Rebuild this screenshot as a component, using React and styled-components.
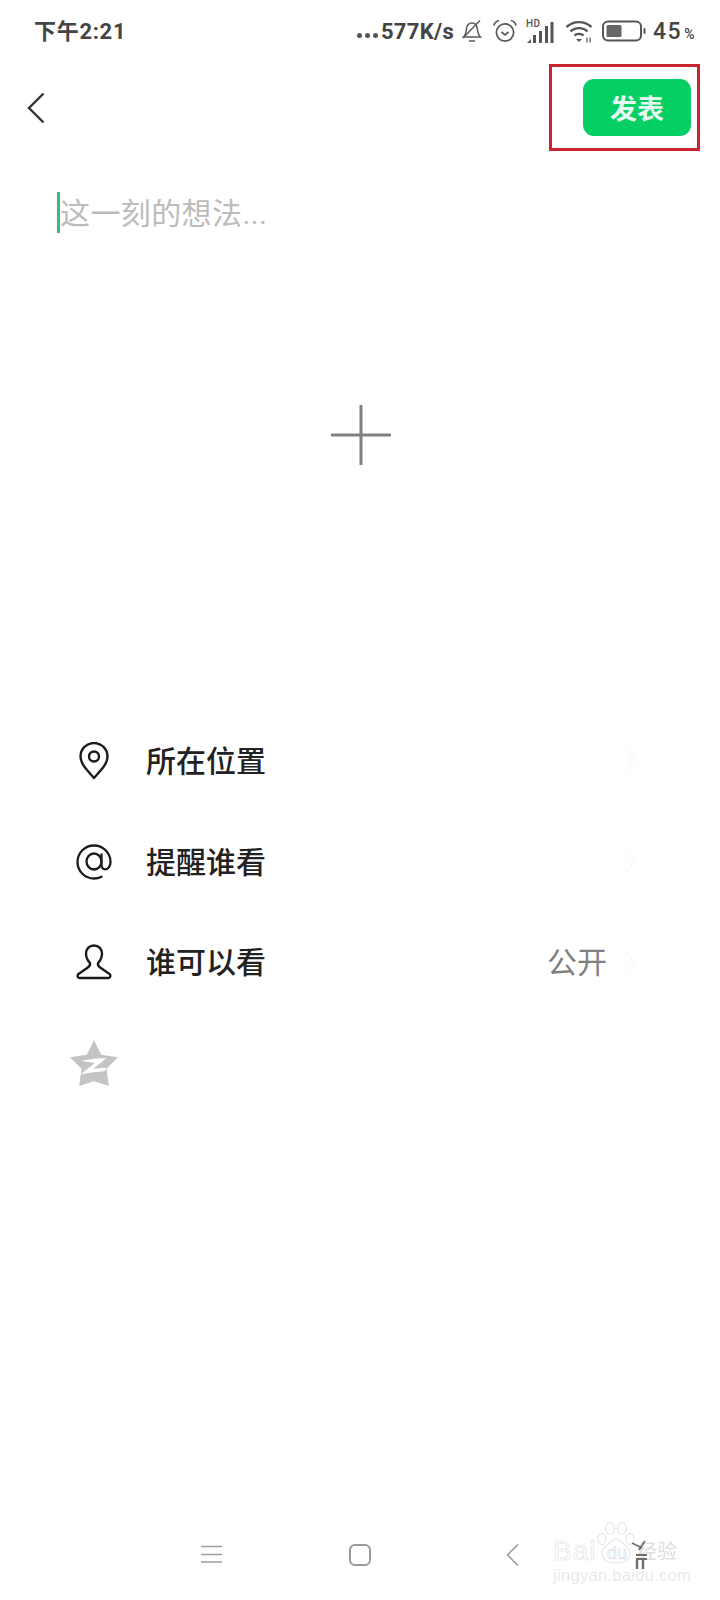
import styled, { createGlobalStyle } from "styled-components";

const GlobalStyle = createGlobalStyle`
  html, body {
    margin: 0;
    padding: 0;
    background: #fff;
  }
  * {
    box-sizing: border-box;
  }
`;

const CJK = `Roboto, "Noto Sans CJK SC", sans-serif`;

const Page = styled.main`
  position: relative;
  width: 720px;
  height: 1600px;
  display: flex;
  flex-direction: column;
  overflow: hidden;
  background: #fff;
  font-family: ${CJK};
`;

const StatusBar = styled.div`
  height: 62px;
  padding: 0 24px 0 34px;
  display: flex;
  align-items: center;
  justify-content: space-between;
  color: #444;
  font-weight: 700;
`;

const Time = styled.span`
  font-size: 22px;
  letter-spacing: 0.7px;
  margin-bottom: 4px;
`;

const StatusRight = styled.div`
  display: flex;
  align-items: center;
`;

const Speed = styled.span`
  font-size: 22px;
  letter-spacing: 0.3px;
  margin-right: 8px;
`;

const Dots = styled.span`
  display: inline-flex;
  gap: 3px;
  margin-right: 3px;
  vertical-align: 1px;

  i {
    width: 5px;
    height: 5px;
    border-radius: 50%;
    background: #555;
  }
`;

const StatusIcon = styled.svg`
  display: block;
  flex: none;
  margin-right: ${(p) => p.$gap || 0}px;
`;

const BatteryText = styled.span`
  font-size: 23px;
  font-weight: 500;
  letter-spacing: 1.5px;
  margin-left: 7px;
`;

const Percent = styled.span`
  font-size: 14px;
  margin-left: 2px;
`;

const Header = styled.header`
  height: 88px;
  padding: 2px 20px 0 27px;
  display: flex;
  justify-content: space-between;
`;

const BackButton = styled.button`
  border: 0;
  padding: 0;
  margin: 28px 0 0;
  height: 32px;
  background: none;
`;

const Highlight = styled.div`
  width: 151px;
  height: 87px;
  border: 3px solid #c9242f;
  padding: 12px 6px 0 0;
  display: flex;
  justify-content: flex-end;
  align-items: flex-start;
`;

const PublishButton = styled.button`
  width: 108px;
  height: 57px;
  border: 0;
  border-radius: 11px;
  background: #06cf63;
  color: #e6fbef;
  font: 700 27px ${CJK};
`;

const Composer = styled.div`
  margin: 42px 0 0 57px;
  height: 41px;
  display: flex;
  align-items: center;
`;

const Caret = styled.span`
  width: 3px;
  height: 41px;
  background: #3abb7c;
`;

const Placeholder = styled.span`
  color: #bcbcbc;
  font-size: 30px;
  line-height: 41px;
  margin-top: 2px;
  letter-spacing: 0.4px;
`;

const AddPhoto = styled.button`
  align-self: flex-start;
  width: 60px;
  height: 60px;
  margin: 172px 0 0 331px;
  padding: 0;
  border: 0;
  background: none;
`;

const Options = styled.ul`
  list-style: none;
  margin: 244px 0 0;
  padding: 0 113px 0 70px;
`;

const Option = styled.li`
  height: 100.5px;
  display: flex;
  align-items: center;
`;

const IconSlot = styled.span`
  width: 48px;
  margin-right: 28px;
  padding-top: 4px;
  display: flex;
  justify-content: center;
`;

const OptionLabel = styled.span`
  flex: 1;
  color: #222;
  font-size: 30px;
  font-weight: 500;
`;

const OptionValue = styled.span`
  color: #808080;
  font-size: 30px;
`;

const FaintChevron = styled.svg`
  position: absolute;
  left: 624px;
  top: ${(p) => p.$top}px;
`;

const NavBar = styled.nav`
  margin-top: auto;
  height: 100px;
  padding: 44px 0 0 201px;
  display: grid;
  grid-template-columns: 148px 157px auto;
  align-items: start;
`;

const Watermark = styled.div`
  position: absolute;
  left: 553px;
  top: 1522px;
  width: 130px;
  height: 62px;
  color: #eaeaea;
`;

const WatermarkBrand = styled.span`
  position: absolute;
  left: 0;
  top: 13px;
  font: 400 28px/32px "Liberation Sans", sans-serif;
  letter-spacing: 1px;
  color: #fff;
  -webkit-text-stroke: 0.7px #e2e2e2;
`;

const WatermarkDu = styled.span`
  position: absolute;
  left: 54px;
  top: 20px;
  font: 400 18px/22px "Liberation Sans", sans-serif;
  color: #fff;
  -webkit-text-stroke: 0.6px #dadada;
`;

const WatermarkName = styled.span`
  position: absolute;
  left: 84px;
  top: 17px;
  font-size: 20px;
  line-height: 26px;
  color: #dedede;
  white-space: nowrap;
`;

const WatermarkUrl = styled.span`
  position: absolute;
  left: 0;
  bottom: 0;
  font: 400 16.5px/18px "Liberation Sans", sans-serif;
  letter-spacing: 0.3px;
  white-space: nowrap;
`;

function BellOff() {
  return (
    <StatusIcon $gap={11} width="20" height="24" viewBox="0 0 20 24" fill="none" stroke="#5a5a5a" strokeWidth="1.500">
      <path d="M1.500 18c2.500-2 2.500-5 3-8.500C5 6 7.500 4 10 4c2.500 0 4.800 2 5.300 5.500.4 3 .7 6.500 3.200 8.500z" />
      <path d="M1 19 18 1.500M7 22h6" />
    </StatusIcon>
  );
}

function Alarm() {
  return (
    <StatusIcon $gap={9} width="24" height="24" viewBox="0 0 24 24" fill="none" stroke="#5a5a5a" strokeWidth="1.700">
      <circle cx="12" cy="13.500" r="8.600" />
      <path d="M8.500 13l3.500 3 3.500-3" />
      <path d="M1 6.500C1.500 4 3.500 2 6 1.500M23 6.500C22.500 4 20.500 2 18 1.500" />
    </StatusIcon>
  );
}

function Signal() {
  return (
    <StatusIcon $gap={11} width="28" height="26" viewBox="0 0 28 26">
      <text x="0" y="9" fontSize="10" fontWeight="500" fill="#555" fontFamily="Roboto, sans-serif" letterSpacing="0.5">HD</text>
      <g fill="#555">
        <path d="M1 25l4-4v4z" />
        <rect x="7" y="17" width="3" height="8" />
        <rect x="13" y="13" width="3" height="12" />
        <rect x="19" y="8" width="3" height="17" />
        <rect x="24.500" y="4" width="3" height="21" />
      </g>
    </StatusIcon>
  );
}

function Wifi() {
  return (
    <StatusIcon $gap={9} width="28" height="24" viewBox="0 0 28 24" fill="none" stroke="#555" strokeWidth="2.400">
      <path d="M1.500 8c7-6.500 18-6.500 25 0M5.500 12.500c4.500-4.500 12.500-4.500 17 0M9.500 16.500c2.500-2.200 6.500-2.200 9 0" />
      <path d="M11 20h6l-3 3z" fill="#555" stroke="none" />
      <path d="M22 18.500v5M25 18.500v5" strokeWidth="1.200" />
    </StatusIcon>
  );
}

function Battery() {
  return (
    <StatusIcon width="44" height="22" viewBox="0 0 44 22" fill="none">
      <rect x="1" y="1.500" width="38" height="19" rx="5" stroke="#555" strokeWidth="2" />
      <rect x="4.500" y="5" width="15" height="12" rx="1.500" fill="#666" />
      <rect x="41.500" y="8" width="2" height="6" rx="1" fill="#555" />
    </StatusIcon>
  );
}

function Pin() {
  return (
    <svg width="30" height="38" viewBox="0 0 30 38" fill="none" stroke="#1c1c1c" strokeWidth="2.400" style={{ display: "block" }}>
      <path d="M15 36C9 29 1.500 22.500 1.500 14.500a13.500 13.500 0 0 1 27 0C28.500 22.500 21 29 15 36z" strokeLinejoin="round" />
      <circle cx="15" cy="14.500" r="5" />
    </svg>
  );
}

function At() {
  return (
    <svg width="36" height="36" viewBox="0 0 36 36" fill="none" stroke="#1c1c1c" strokeWidth="2.300" style={{ display: "block" }}>
      <ellipse cx="18" cy="17.500" rx="7.500" ry="8" />
      <path d="M25.500 10.500v10.500c0 3 1.700 4.300 3.800 4.300 3 0 5.200-3.300 5.200-7.300C34.500 8.800 27 1.500 18 1.500S1.500 8.800 1.500 18 9 34.500 18 34.500c2.700 0 5-.5 7.500-1.800" strokeLinecap="round" />
    </svg>
  );
}

function Person() {
  return (
    <svg width="36" height="36" viewBox="0 0 36 36" fill="none" stroke="#1c1c1c" strokeWidth="2.400" style={{ display: "block" }}>
      <path
        d="M18 1.500c-5 0-8 3.500-8 8 0 4 2 7.500 4 9.500.5 2-.5 3.500-2.500 4.800L2.500 30c-1.500 1.200-1 4 1 4h29c2 0 2.500-2.800 1-4l-9-6.200c-2-1.300-3-2.800-2.500-4.800 2-2 4-5.500 4-9.500 0-4.500-3-8-8-8z"
        strokeLinejoin="round"
      />
    </svg>
  );
}

function QzoneStar() {
  return (
    <svg width="50" height="48" viewBox="0 0 50 48" style={{ display: "block" }}>
      <path d="M25 0l7.500 15.500L50 18 38 30l2.500 18L25 43 9.500 48 12 30 0 18l17.500-2.500z" fill="#c4c4c4" />
      <path d="M12 22c8-2.500 17-3 26-3l-14 11 14-1-2 3.500c-7 .5-16 1-25 3.500l15-12z" fill="#fff" />
    </svg>
  );
}

function Chevron({ top }) {
  return (
    <FaintChevron $top={top} width="12" height="24" viewBox="0 0 12 24" fill="none" stroke="#fafafa" strokeWidth="2">
      <path d="M1 1l10 11L1 23" />
    </FaintChevron>
  );
}

function App() {
  return (
    <Page>
      <GlobalStyle />
      <StatusBar>
        <Time>下午2:21</Time>
        <StatusRight>
          <Speed>
            <Dots>
              <i />
              <i />
              <i />
            </Dots>
            577K/s
          </Speed>
          <BellOff />
          <Alarm />
          <Signal />
          <Wifi />
          <Battery />
          <BatteryText>
            45<Percent>%</Percent>
          </BatteryText>
        </StatusRight>
      </StatusBar>

      <Header>
        <BackButton aria-label="返回">
          <svg width="18" height="32" viewBox="0 0 18 32" fill="none" stroke="#333" strokeWidth="2.400" style={{ display: "block" }}>
            <path d="M16.500 1.500 2 16l14.500 14.500" />
          </svg>
        </BackButton>
        <Highlight>
          <PublishButton>发表</PublishButton>
        </Highlight>
      </Header>

      <Composer>
        <Caret />
        <Placeholder>这一刻的想法...</Placeholder>
      </Composer>

      <AddPhoto aria-label="添加图片">
        <svg width="60" height="60" viewBox="0 0 60 60" stroke="#808080" strokeWidth="3" style={{ display: "block" }}>
          <path d="M30 0v60M0 30h60" />
        </svg>
      </AddPhoto>

      <Options>
        <Option>
          <IconSlot>
            <Pin />
          </IconSlot>
          <OptionLabel>所在位置</OptionLabel>
        </Option>
        <Option>
          <IconSlot>
            <At />
          </IconSlot>
          <OptionLabel>提醒谁看</OptionLabel>
        </Option>
        <Option>
          <IconSlot>
            <Person />
          </IconSlot>
          <OptionLabel>谁可以看</OptionLabel>
          <OptionValue>公开</OptionValue>
        </Option>
        <Option>
          <IconSlot>
            <QzoneStar />
          </IconSlot>
        </Option>
      </Options>
      <Chevron top={748} />
      <Chevron top={850} />
      <Chevron top={950} />

      <NavBar>
        <svg width="21" height="20" viewBox="0 0 21 20" stroke="#a0a0a0" strokeWidth="1.600" style={{ display: "block" }}>
          <path d="M0 2.500h21M0 10.500h21M0 18h21" />
        </svg>
        <svg width="22" height="22" viewBox="0 0 22 22" fill="none" stroke="#9a9a9a" strokeWidth="2" style={{ display: "block" }}>
          <rect x="1" y="1" width="20" height="20" rx="5" />
        </svg>
        <svg width="13" height="22" viewBox="0 0 13 22" fill="none" stroke="#a0a0a0" strokeWidth="1.600" style={{ display: "block" }}>
          <path d="M12 .5 1.500 11 12 21.500" />
        </svg>
      </NavBar>

      <Watermark>
        <WatermarkBrand>Bai</WatermarkBrand>
        <svg width="40" height="42" viewBox="0 0 40 42" fill="none" stroke="#e6e6e6" strokeWidth="1.200" style={{ position: "absolute", left: 43, top: 0 }}>
          <ellipse cx="6" cy="17" rx="4" ry="5.500" />
          <ellipse cx="14" cy="6.500" rx="4.500" ry="6" />
          <ellipse cx="26" cy="6.500" rx="4.500" ry="6" />
          <ellipse cx="34" cy="17" rx="4" ry="5.500" />
          <path d="M20 17c-4 0-6 4-9 6-4 3-6 6-5 10 1 5 6 8 14 8s13-3 14-8c1-4-1-7-5-10-3-2-5-6-9-6z" />
        </svg>
        <WatermarkDu>du</WatermarkDu>
        <WatermarkName>经验</WatermarkName>
        <svg width="18" height="30" viewBox="0 0 18 30" fill="none" stroke="#6f6f6f" strokeWidth="1.800" style={{ position: "absolute", left: 78, top: 18 }}>
          <path d="M1 3l10 5M14 1 8 10M5 15h11M5 19h11" />
          <path d="M6 20v9M12 20v9" strokeWidth="2.400" />
        </svg>
        <WatermarkUrl>jingyan.baidu.com</WatermarkUrl>
      </Watermark>
    </Page>
  );
}

export default App;
